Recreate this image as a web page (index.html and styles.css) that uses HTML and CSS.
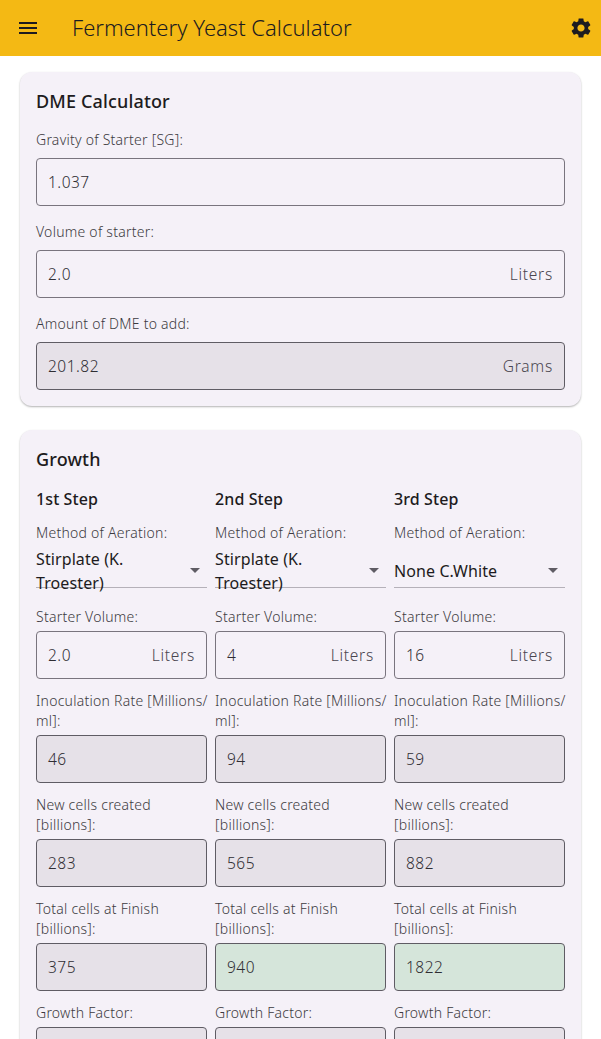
FILE: index.html
```html
<!DOCTYPE html>
<html lang="en">
<head>
    <meta charset="UTF-8">
    <meta name="viewport" content="width=device-width, initial-scale=1.0">
    <title>Fermentery Yeast Calculator</title>
    <link rel="stylesheet" href="styles.css">
</head>
<body>
    <header class="toolbar">
        <svg class="menu-icon" width="24" height="24" viewBox="0 0 24 24"><path d="M3 18h18v-2H3v2zm0-5h18v-2H3v2zm0-7v2h18V6H3z"/></svg>
        <div class="toolbar-title">Fermentery Yeast Calculator</div>
        <svg class="gear-icon" width="24" height="24" viewBox="0 0 24 24"><path d="M19.14 12.94c.04-.3.06-.61.06-.94 0-.32-.02-.64-.07-.94l2.03-1.58c.18-.14.23-.41.12-.61l-1.92-3.32c-.12-.22-.37-.29-.59-.22l-2.39.96c-.5-.38-1.03-.7-1.62-.94l-.36-2.54c-.04-.24-.24-.41-.48-.41h-3.84c-.24 0-.43.17-.47.41l-.36 2.54c-.59.24-1.13.57-1.62.94l-2.39-.96c-.22-.08-.47 0-.59.22L2.74 8.87c-.12.21-.08.47.12.61l2.03 1.58c-.05.3-.09.63-.09.94s.02.64.07.94l-2.03 1.58c-.18.14-.23.41-.12.61l1.92 3.32c.12.22.37.29.59.22l2.39-.96c.5.38 1.03.7 1.62.94l.36 2.54c.05.24.24.41.48.41h3.84c.24 0 .44-.17.47-.41l.36-2.54c.59-.24 1.13-.56 1.62-.94l2.39.96c.22.08.47 0 .59-.22l1.92-3.32c.12-.22.07-.47-.12-.61l-2.01-1.58zM12 15.6c-1.98 0-3.6-1.62-3.6-3.6s1.62-3.6 3.6-3.6 3.6 1.62 3.6 3.6-1.62 3.6-3.6 3.6z"/></svg>
    </header>

    <main class="content">
        <section class="card">
            <h2 class="card-title">DME Calculator</h2>
            <div class="field">
                <label>Gravity of Starter [SG]:</label>
                <div class="input"><span>1.037</span></div>
            </div>
            <div class="field">
                <label>Volume of starter:</label>
                <div class="input"><span>2.0</span><span class="unit">Liters</span></div>
            </div>
            <div class="field">
                <label>Amount of DME to add:</label>
                <div class="input readonly"><span>201.82</span><span class="unit">Grams</span></div>
            </div>
        </section>

        <section class="card">
            <h2 class="card-title">Growth</h2>
            <div class="steps">
                <div class="step">
                    <h3 class="step-title">1st Step</h3>
                    <div class="field">
                        <label>Method of Aeration:</label>
                        <div class="select"><div class="select-value">Stirplate (K. Troester)</div><i class="arrow"></i></div>
                    </div>
                    <div class="field">
                        <label>Starter Volume:</label>
                        <div class="input"><span>2.0</span><span class="unit">Liters</span></div>
                    </div>
                    <div class="field">
                        <label>Inoculation Rate [Millions/<br>ml]:</label>
                        <div class="input readonly"><span>46</span></div>
                    </div>
                    <div class="field">
                        <label>New cells created<br>[billions]:</label>
                        <div class="input readonly"><span>283</span></div>
                    </div>
                    <div class="field">
                        <label>Total cells at Finish<br>[billions]:</label>
                        <div class="input readonly"><span>375</span></div>
                    </div>
                    <div class="field">
                        <label>Growth Factor:</label>
                        <div class="input readonly"></div>
                    </div>
                </div>

                <div class="step">
                    <h3 class="step-title">2nd Step</h3>
                    <div class="field">
                        <label>Method of Aeration:</label>
                        <div class="select"><div class="select-value">Stirplate (K. Troester)</div><i class="arrow"></i></div>
                    </div>
                    <div class="field">
                        <label>Starter Volume:</label>
                        <div class="input"><span>4</span><span class="unit">Liters</span></div>
                    </div>
                    <div class="field">
                        <label>Inoculation Rate [Millions/<br>ml]:</label>
                        <div class="input readonly"><span>94</span></div>
                    </div>
                    <div class="field">
                        <label>New cells created<br>[billions]:</label>
                        <div class="input readonly"><span>565</span></div>
                    </div>
                    <div class="field">
                        <label>Total cells at Finish<br>[billions]:</label>
                        <div class="input readonly good"><span>940</span></div>
                    </div>
                    <div class="field">
                        <label>Growth Factor:</label>
                        <div class="input readonly"></div>
                    </div>
                </div>

                <div class="step">
                    <h3 class="step-title">3rd Step</h3>
                    <div class="field">
                        <label>Method of Aeration:</label>
                        <div class="select"><div class="select-value">None C.White</div><i class="arrow"></i></div>
                    </div>
                    <div class="field">
                        <label>Starter Volume:</label>
                        <div class="input"><span>16</span><span class="unit">Liters</span></div>
                    </div>
                    <div class="field">
                        <label>Inoculation Rate [Millions/<br>ml]:</label>
                        <div class="input readonly"><span>59</span></div>
                    </div>
                    <div class="field">
                        <label>New cells created<br>[billions]:</label>
                        <div class="input readonly"><span>882</span></div>
                    </div>
                    <div class="field">
                        <label>Total cells at Finish<br>[billions]:</label>
                        <div class="input readonly good"><span>1822</span></div>
                    </div>
                    <div class="field">
                        <label>Growth Factor:</label>
                        <div class="input readonly"></div>
                    </div>
                </div>
            </div>
        </section>
    </main>
</body>
</html>
```

FILE: styles.css
```css
html, body {
    height: 100%;
    margin: 0;
    overflow: hidden;
}
body {
    background: #ffffff;
    color: #1d1b20;
    font-family: "Noto Sans", "Open Sans", sans-serif;
}
.toolbar {
    display: flex;
    align-items: center;
    height: 56px;
    padding: 0 8px 0 16px;
    background: #f4b914;
}
.menu-icon {
    fill: #1d1b20;
    margin-right: 32px;
}
.gear-icon {
    fill: #1d1b20;
}
.toolbar-title {
    flex: 1;
    margin-top: -2px;
    font-size: 22px;
    font-weight: 300;
}
.content {
    padding: 16px 20px;
}
.card {
    margin-bottom: 24px;
    padding: 16px;
    background: #f5f1f8;
    border-radius: 12px;
    box-shadow: 0 1px 2px rgba(0, 0, 0, 0.3);
}
.card-title {
    margin: 0 0 16px;
    font-size: 18px;
    font-weight: 500;
    letter-spacing: 0.15px;
    line-height: 26px;
}
.card > .field:last-child {
    margin-bottom: 0;
}
.steps {
    display: flex;
    gap: 8px;
}
.step {
    flex: 1;
    min-width: 0;
}
.step-title {
    margin: 0 0 13px;
    font-size: 16px;
    font-weight: 500;
    letter-spacing: 0.1px;
    line-height: 22px;
}
.field {
    display: flow-root;
    margin-bottom: 16px;
}
.field label {
    display: block;
    margin-bottom: 8px;
    font-size: 14px;
    font-weight: 300;
    letter-spacing: 0.25px;
    line-height: 20px;
    white-space: nowrap;
    color: #3c3a40;
}
.step .field {
    margin-bottom: 12px;
}
.step .field label {
    margin-bottom: 4px;
}
.input {
    display: flex;
    align-items: center;
    justify-content: space-between;
    box-sizing: border-box;
    height: 48px;
    padding: 0 11px;
    border: 1px solid #79747e;
    border-radius: 4px;
    font-size: 15.5px;
    font-weight: 300;
    letter-spacing: 0.5px;
    color: #2f2d33;
}
.unit {
    letter-spacing: 0.75px;
    color: #49454f;
}
.readonly {
    background: #e6e1e8;
    border-color: #5f5c64;
}
.good {
    background: #d5e5da;
}
.select {
    display: flex;
    justify-content: space-between;
    height: 40px;
    margin-bottom: 7px;
    border-bottom: 1px solid #b5b1b9;
}
.select-value {
    display: flex;
    align-items: center;
    height: 48px;
    padding-right: 22px;
    font-size: 16px;
    letter-spacing: 0.1px;
    line-height: 24px;
}
.arrow {
    flex: none;
    align-self: flex-start;
    width: 0;
    height: 0;
    margin: 21px 7px 0 -17px;
    border-left: 5px solid transparent;
    border-right: 5px solid transparent;
    border-top: 5px solid #5f5c64;
}
```
